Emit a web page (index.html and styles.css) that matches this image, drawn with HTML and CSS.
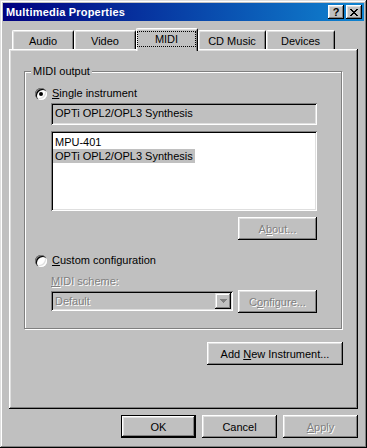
FILE: index.html
```html
<!DOCTYPE html>
<html lang="en">
<head>
    <meta charset="UTF-8">
    <title>Multimedia Properties</title>
    <link rel="stylesheet" href="styles.css">
</head>
<body>
    <div class="window">
        <div class="titlebar">
            <span class="title">Multimedia Properties</span>
            <button class="title-btn help">?</button>
            <button class="title-btn close">
                <svg width="8" height="7" viewBox="0 0 8 7" shape-rendering="crispEdges">
                    <path d="M0 0h2v1h-2zM6 0h2v1h-2zM1 1h2v1h-2zM5 1h2v1h-2zM2 2h4v1h-4zM3 3h2v1h-2zM2 4h4v1h-4zM1 5h2v1h-2zM5 5h2v1h-2zM0 6h2v1h-2zM6 6h2v1h-2z" fill="#000"/>
                </svg>
            </button>
        </div>

        <div class="tabs">
            <div class="tab tab-audio">Audio</div>
            <div class="tab tab-video">Video</div>
            <div class="tab tab-midi active"><span class="focus">MIDI</span></div>
            <div class="tab tab-cd">CD Music</div>
            <div class="tab tab-devices">Devices</div>
        </div>

        <div class="panel">
            <div class="group">
                <span class="legend">MIDI output</span>

                <div class="radio-row">
                    <span class="radio checked"></span>
                    <span><u>S</u>ingle instrument</span>
                </div>
                <div class="indent">
                    <div class="field">OPTi OPL2/OPL3 Synthesis</div>
                    <div class="listbox">
                        <div class="item"><span>MPU-401</span></div>
                        <div class="item selected"><span>OPTi OPL2/OPL3 Synthesis</span></div>
                    </div>
                    <div class="row-end">
                        <button class="btn btn-about" disabled>A<u>b</u>out...</button>
                    </div>
                </div>

                <div class="radio-row radio-custom">
                    <span class="radio"></span>
                    <span><u>C</u>ustom configuration</span>
                </div>
                <div class="indent">
                    <div class="sub-label disabled-text"><u>M</u>IDI scheme:</div>
                    <div class="combo-row">
                        <div class="combo">
                            <span class="disabled-text">Default</span>
                            <span class="drop">
                                <svg width="7" height="4" viewBox="0 0 7 4" shape-rendering="crispEdges">
                                    <path d="M0 0h7v1h-7zM1 1h5v1h-5zM2 2h3v1h-3zM3 3h1v1h-1z" fill="#808080"/>
                                </svg>
                            </span>
                        </div>
                        <button class="btn btn-configure" disabled>C<u>o</u>nfigure...</button>
                    </div>
                </div>
            </div>

            <div class="panel-actions">
                <button class="btn btn-add">Add <u>N</u>ew Instrument...</button>
            </div>
        </div>

        <div class="dialog-buttons">
            <button class="btn btn-default">OK</button>
            <button class="btn">Cancel</button>
            <button class="btn" disabled><u>A</u>pply</button>
        </div>
    </div>
</body>
</html>
```

FILE: styles.css
```css
* {
    box-sizing: border-box;
}

body {
    margin: 0;
    background: #c0c0c0;
    font-family: "Liberation Sans", Arial, sans-serif;
    font-size: 11px;
    color: #000000;
}

u {
    text-decoration: underline;
    text-underline-offset: 1px;
}

.window {
    width: 367px;
    height: 448px;
    padding: 3px;
    background: #c0c0c0;
    box-shadow: inset -1px -1px #000000, inset 1px 1px #dfdfdf,
                inset -2px -2px #808080, inset 2px 2px #ffffff;
}

/* title bar */

.titlebar {
    display: flex;
    align-items: center;
    height: 18px;
    padding: 0 2px 0 3px;
    background: linear-gradient(to right, #000080, #1084d0);
}

.title {
    flex: 1;
    color: #ffffff;
    font-weight: bold;
    font-size: 11px;
    letter-spacing: 0.2px;
}

.title-btn {
    display: flex;
    align-items: center;
    justify-content: center;
    width: 16px;
    height: 14px;
    padding: 0;
    border: none;
    background: #c0c0c0;
    font-family: "Liberation Sans", Arial, sans-serif;
    font-weight: bold;
    font-size: 11px;
    line-height: 14px;
    box-shadow: inset -1px -1px #000000, inset 1px 1px #ffffff,
                inset -2px -2px #808080, inset 2px 2px #dfdfdf;
}

.title-btn.close {
    margin-left: 2px;
}

/* tabs */

.tabs {
    display: flex;
    align-items: flex-end;
    height: 21px;
    margin: 7px 0 0 9px;
}

.tab {
    height: 19px;
    padding-top: 4px;
    line-height: 13px;
    text-align: center;
    background: #c0c0c0;
    border-top: 1px solid #ffffff;
    border-left: 1px solid #ffffff;
    border-right: 1px solid #000000;
    border-radius: 2px 2px 0 0;
    box-shadow: inset 1px 1px #dfdfdf, inset -1px 0 #808080;
}

.tab-audio { width: 62px; }
.tab-video { width: 62px; }
.tab-midi { width: 62px; }
.tab-cd { width: 68px; }
.tab-devices { width: 69px; }

.tab.active {
    position: relative;
    z-index: 1;
    height: 23px;
    margin-bottom: -2px;
    padding-top: 2px;
}

.focus {
    display: block;
    height: 16px;
    margin: 0 1px 0 0;
    line-height: 14px;
    border: 1px dotted #000000;
}

/* panel */

.panel {
    width: 349px;
    height: 360px;
    margin-left: 6px;
    padding: 22px 15px 0 15px;
    box-shadow: inset -1px -1px #000000, inset 1px 1px #ffffff,
                inset -2px -2px #808080, inset 2px 2px #dfdfdf;
}

.group {
    position: relative;
    width: 318px;
    height: 258px;
    padding: 15px 0 0 10px;
    border: 1px solid #808080;
    box-shadow: 1px 1px 0 #ffffff, inset 1px 1px 0 #ffffff;
}

.legend {
    position: absolute;
    top: -7px;
    left: 6px;
    padding: 0 2px;
    line-height: 13px;
    background: #c0c0c0;
}

.radio-row {
    display: flex;
    align-items: center;
    gap: 5px;
    height: 13px;
    line-height: 13px;
}

.radio-custom {
    margin-top: 14px;
}

.radio {
    position: relative;
    width: 12px;
    height: 12px;
    border-radius: 50%;
    background: #ffffff;
    box-shadow: inset 1px 1px 0 #808080, inset 2px 2px 0 #000000,
                inset -1px -1px 0 #ffffff, inset -2px -2px 0 #dfdfdf;
}

.radio.checked::after {
    content: "";
    position: absolute;
    top: 4px;
    left: 4px;
    width: 4px;
    height: 4px;
    border-radius: 50%;
    background: #000000;
}

.indent {
    margin-left: 16px;
    width: 266px;
}

.sunken {
    box-shadow: inset 1px 1px #808080, inset -1px -1px #ffffff,
                inset 2px 2px #000000, inset -2px -2px #dfdfdf;
}

.field {
    height: 22px;
    margin-top: 3px;
    padding: 4px 4px 0;
    line-height: 13px;
    background: #c0c0c0;
    box-shadow: inset 1px 1px #808080, inset -1px -1px #ffffff,
                inset 2px 2px #000000, inset -2px -2px #dfdfdf;
}

.listbox {
    height: 80px;
    margin-top: 6px;
    padding: 4px 2px 2px;
    background: #ffffff;
    box-shadow: inset 1px 1px #808080, inset -1px -1px #ffffff,
                inset 2px 2px #000000, inset -2px -2px #dfdfdf;
}

.item {
    height: 14px;
    line-height: 14px;
}

.item span {
    display: inline-block;
    padding: 0 2px;
}

.item.selected span {
    background: #c0c0c0;
}

.row-end {
    display: flex;
    justify-content: flex-end;
    margin-top: 6px;
}

.sub-label {
    margin-top: 8px;
    line-height: 13px;
}

.disabled-text {
    color: #808080;
    text-shadow: 1px 1px 0 #ffffff;
}

.combo-row {
    display: flex;
    align-items: flex-start;
    justify-content: space-between;
    margin-top: 2px;
}

.combo {
    display: flex;
    align-items: center;
    justify-content: space-between;
    width: 182px;
    height: 20px;
    margin-top: 1px;
    padding: 2px 2px 2px 4px;
    background: #c0c0c0;
    box-shadow: inset 1px 1px #808080, inset -1px -1px #ffffff,
                inset 2px 2px #000000, inset -2px -2px #dfdfdf;
}

.drop {
    display: flex;
    align-items: center;
    justify-content: center;
    width: 16px;
    height: 16px;
    box-shadow: inset -1px -1px #000000, inset 1px 1px #dfdfdf,
                inset -2px -2px #808080, inset 2px 2px #ffffff;
}

/* buttons */

.btn {
    width: 75px;
    height: 23px;
    padding: 0;
    border: none;
    background: #c0c0c0;
    font-family: "Liberation Sans", Arial, sans-serif;
    font-size: 11px;
    color: #000000;
    box-shadow: inset -1px -1px #000000, inset 1px 1px #ffffff,
                inset -2px -2px #808080, inset 2px 2px #dfdfdf;
}

.btn:disabled {
    color: #808080;
    text-shadow: 1px 1px 0 #ffffff;
}

.btn-about,
.btn-configure {
    width: 79px;
}

.btn-add {
    width: 136px;
}

.btn-default {
    border: 1px solid #000000;
}

.panel-actions {
    display: flex;
    justify-content: flex-end;
    margin-top: 13px;
}

.dialog-buttons {
    display: flex;
    justify-content: flex-end;
    gap: 6px;
    margin: 6px 6px 0 0;
}
```
